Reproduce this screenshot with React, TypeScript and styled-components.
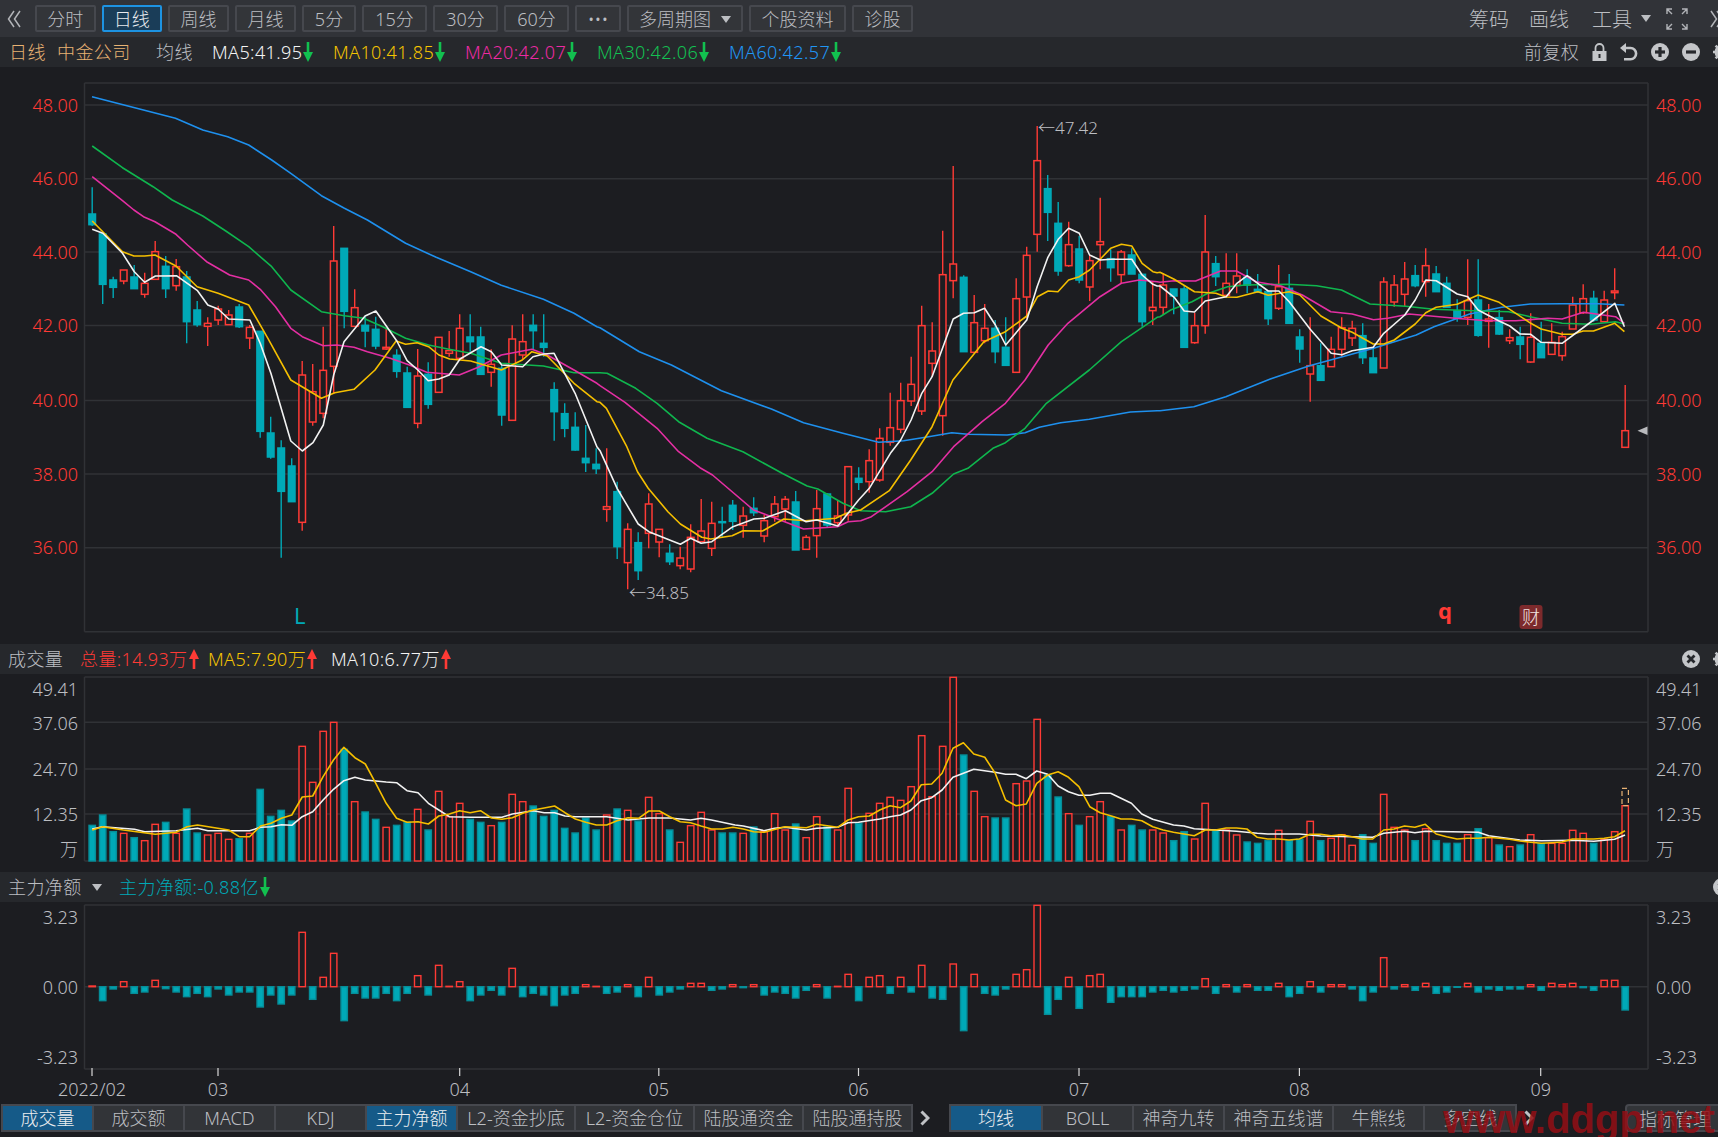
import React from "react";
import styled, { createGlobalStyle } from "styled-components";

const BG = "#1c1d21";
const RED = "#ff3a35";
const CYAN = "#00a9b7";
const GRID = "#303236";
const GREY = "#bcbec2";

const GlobalStyle = createGlobalStyle`
  html, body {
    margin: 0;
    padding: 0;
    background: ${BG};
    overflow: hidden;
    font-family: "Noto Sans", "Noto Sans CJK SC", sans-serif;
    font-weight: 300;
  }
`;

const Page = styled.div`
  position: relative;
  width: 1718px;
  height: 1137px;
  overflow: hidden;
  display: flex;
  flex-direction: column;
  background: ${BG};
`;

const Toolbar = styled.div`
  height: 37px;
  flex: none;
  display: flex;
  align-items: center;
  background: #313338;
  padding-left: 7px;
`;

const ToolGroup = styled.div`
  display: flex;
  gap: 6px;
  margin-left: 14px;
`;

const ToolButton = styled.div<{ $w: number; $active?: boolean }>`
  box-sizing: border-box;
  width: ${(p) => p.$w}px;
  height: 27px;
  padding-top: 1px;
  display: flex;
  align-items: center;
  justify-content: center;
  gap: 10px;
  font-size: 18px;
  line-height: 1;
  color: ${(p) => (p.$active ? "#e8eaee" : GREY)};
  background: ${(p) => (p.$active ? "#1a3d58" : "#333539")};
  border: 2px solid ${(p) => (p.$active ? "#1d93e2" : "#46484e")};
  border-radius: 2px;
`;

const ToolLinks = styled.div`
  margin-left: auto;
  margin-right: -6px;
  display: flex;
  align-items: center;
  font-size: 20px;
  color: ${GREY};
`;

const ToolLink = styled.span<{ $w: number }>`
  width: ${(p) => p.$w}px;
  flex: none;
`;

const Caret = styled.span<{ $ml?: number }>`
  width: 0;
  height: 0;
  flex: none;
  margin-left: ${(p) => p.$ml ?? 0}px;
  border-left: 5.5px solid transparent;
  border-right: 5.5px solid transparent;
  border-top: 7px solid ${GREY};
`;

const InfoRow = styled.div`
  height: 30px;
  flex: none;
  display: flex;
  align-items: center;
  background: #26282c;
  font-size: 18px;
  line-height: 1;
  padding-left: 9px;
`;

const SubHeader = styled(InfoRow)`
  padding-left: 8px;
`;

const Label = styled.span<{ $c: string; $w: number }>`
  flex: none;
  width: ${(p) => p.$w}px;
  color: ${(p) => p.$c};
  display: flex;
  align-items: center;
  gap: 1px;
  letter-spacing: 0.4px;
  white-space: nowrap;
`;

const RightTools = styled.div`
  margin-left: auto;
  margin-right: -13px;
  display: flex;
  align-items: center;
  gap: 13px;
  color: ${GREY};
`;

const Svg = styled.svg`
  display: block;
  flex: none;
`;

const ChartSvg = styled.svg`
  display: block;
  flex: none;
`;

const ChartText = styled.text<{ $c?: string; $s?: number; $w?: number }>`
  fill: ${(p) => p.$c ?? GREY};
  font-size: ${(p) => p.$s ?? 18}px;
  font-weight: ${(p) => p.$w ?? 300};
  dominant-baseline: central;
`;

const TabsRow = styled.div`
  height: 34px;
  flex: none;
  display: flex;
  align-items: flex-start;
  padding: 1px 0 0 1px;
`;

const TabGroup = styled.div`
  display: flex;
  gap: 2px;
  padding: 2px;
  background: #46484e;
`;

const Tab = styled.div<{ $w: number; $active?: boolean }>`
  width: ${(p) => p.$w}px;
  height: 24px;
  display: flex;
  align-items: center;
  justify-content: center;
  font-size: 18px;
  line-height: 1;
  color: ${(p) => (p.$active ? "#eceef0" : GREY)};
  background: ${(p) => (p.$active ? "#155a88" : "#323438")};
`;

const ChevronSlot = styled.div<{ $w: number }>`
  width: ${(p) => p.$w}px;
  height: 28px;
  flex: none;
  display: flex;
  align-items: center;
  padding-left: 7px;
  box-sizing: border-box;
`;

const ManageButton = styled.div`
  box-sizing: border-box;
  width: 100px;
  height: 28px;
  margin-left: 92px;
  flex: none;
  padding-left: 12px;
  display: flex;
  align-items: center;
  font-size: 18px;
  color: ${GREY};
  background: #323438;
  border: 2px solid #46484e;
  border-radius: 4px 0 0 4px;
  white-space: nowrap;
`;

const Watermark = styled.div`
  position: absolute;
  left: 1443px;
  top: 1096px;
  font-family: "Liberation Sans", sans-serif;
  font-weight: 700;
  font-size: 40px;
  line-height: 46px;
  color: rgba(148, 14, 20, 0.85);
  white-space: nowrap;
  pointer-events: none;
`;

type Row = number[];
type Pt = [number, number];

const X0 = 92.2;
const STEP = 10.5;
const barX = (i: number) => X0 + STEP * i;

// candle rows: body top, body bottom, high, low, 1 = up (hollow red). Read from the chart at 3x.
const candleSegA: Row[] = [
  [252,284,172,288,0],[312,463,312,522,0],[450,472,440,504,0],[420,453,420,463,1],[441,476,405,476,0],
  [460,493,428,503,1],[365,448,333,448,1],[409,476,378,504,0],[410,467,387,482,1],[441,575,423,640,0],
  [540,584,513,590,0],[580,589,562,648,1],[537,570,527,585,1],[555,584,540,584,1],[531,590,522,594,0],
  [592,624,585,657,1],[604,904,604,923,0],[909,981,860,986,0],[954,1084,931,1283,0],[1008,1115,985,1115,0],
  [735,1177,693,1202,1],[785,876,702,887,1],[721,850,590,865,1],[393,709,288,790,1],[355,544,355,595,0],
  [533,589,478,590,1],[586,603,560,652,0],[598,648,560,658,0],[652,657,595,660,1],[676,724,658,743,0],
  [729,832,710,833,0],[738,880,657,895,1],[733,823,697,836,0],[622,787,622,787,1],[662,670,603,680,1],
  [595,685,553,685,1],[621,635,553,665,0],[621,733,590,733,0],[703,727,658,770,1],[715,855,706,887,0],
  [627,871,586,871,1],[635,675,553,688,1],[586,602,553,660,0],[640,652,553,680,0],[779,845,757,932,0],
  [851,895,820,922,0],[892,960,847,962,0],[985,998,885,1026,0],[1003,1016,955,1032,0],
];
const candleSegB: Row[] = [
  [1220,1228,1045,1265,1],[1175,1340,1145,1377,0],[1288,1388,1270,1468,1],[1328,1412,1297,1440,0],[1212,1300,1180,1345,1],
  [1288,1326,1288,1372,1],[1360,1385,1333,1395,0],[1374,1397,1340,1408,1],[1312,1407,1273,1417,1],[1293,1325,1197,1325,1],
  [1270,1345,1205,1368,1],[1265,1268,1220,1310,0],[1216,1264,1200,1290,0],[1248,1276,1220,1313,1],[1225,1238,1192,1248,0],
  [1262,1308,1245,1327,1],[1212,1250,1188,1265,1],[1198,1227,1188,1265,1],[1206,1350,1173,1350,0],[1312,1348,1305,1348,1],
  [1226,1307,1170,1373,1],[1182,1275,1180,1282,0],[1248,1268,1200,1280,1],[1100,1245,1100,1262,1],[1135,1147,1102,1170,0],
  [1082,1145,1048,1178,1],[1015,1140,985,1145,1],[983,1027,878,1037,1],[902,988,848,1000,1],[853,903,770,918,1],
  [677,933,617,945,1],[753,790,667,830,1],[524,947,392,1007,1],[492,542,198,595,1],[532,755,526,755,0],
  [668,757,585,760,1],[685,722,612,730,1],[685,755,660,790,0],[742,796,652,796,0],[596,817,535,817,1],
  [466,591,440,655,1],[182,403,78,455,1],[266,337,225,423,0],[370,513,306,527,0],[434,497,365,500,1],
  [447,540,408,550,0],[482,561,465,603,1],[425,434,293,508,1],[476,503,448,545,0],[456,524,450,550,1],
  [465,522,445,522,0],[523,665,523,680,0],[622,632,545,675,1],
];
const candleSegC: Row[] = [
  [195,262,160,285,1],[207,228,207,283,0],[207,382,195,382,0],[317,368,278,371,1],[96,317,-15,341,1],
  [131,170,108,198,0],[190,226,100,226,1],[168,196,100,220,1],[172,195,148,220,0],[208,216,162,218,0],
  [215,296,215,315,0],[200,265,135,270,1],[205,310,162,310,0],[351,387,328,428,0],[437,462,292,545,1],
  [437,481,370,482,0],[388,440,350,440,1],[323,388,292,410,1],[325,354,302,378,1],[347,413,310,432,0],
  [414,458,380,458,0],[186,444,172,444,1],[195,246,165,260,1],[177,223,126,260,1],[167,197,135,202,0],
  [137,185,85,230,1],[162,215,138,215,0],[190,262,170,262,0],[272,295,238,305,0],[242,292,118,315,1],
  [240,346,118,350,0],[297,304,252,383,1],[293,342,270,345,0],[353,362,328,372,1],[351,373,320,418,0],
  [352,426,280,428,1],[370,413,305,413,0],[367,403,310,405,1],[350,407,335,422,1],[255,327,230,327,1],
  [236,278,193,282,1],[235,300,212,305,0],[240,305,212,305,1],[213,218,145,238,1],[632,682,495,682,1],
];

const decode = (rows: Row[], y0: number) =>
  rows.map(([t, b, h, l, up]) => ({
    top: y0 + t / 3,
    bottom: y0 + b / 3,
    high: y0 + h / 3,
    low: y0 + l / 3,
    up: up === 1,
  }));

const candles = [
  ...decode(candleSegA, 130),
  ...decode(candleSegB, 100),
  ...decode(candleSegC, 220),
];

const sA = (p: Pt[]): Pt[] => p.map(([x, y]) => [x / 2.6133, 130 + y / 3]);
const sB = (p: Pt[]): Pt[] => p.map(([x, y]) => [600 + x / 2.8, 100 + y / 3]);
const sC = (p: Pt[]): Pt[] => p.map(([x, y]) => [1160 + x / 2.81, 220 + y / 3]);
const sV1 = (p: Pt[]): Pt[] => p.map(([x, y]) => [x / 1.823, 640 + y / 3]);
const sV2 = (p: Pt[]): Pt[] => p.map(([x, y]) => [860 + x / 1.8275, 640 + y / 3]);

const ma60: Pt[] = [
  [92, 96.7], [175.5, 118.3],
  ...sA([[530,0],[595,20],[650,45],[710,90],[760,130],[840,197],[900,235],[960,270],[1060,340],[1140,382],[1230,425],[1310,466],[1420,508],[1500,550],[1560,590]]),
  ...sB([[0,683],[110,755],[200,795],[340,872],[480,927],[570,968],[680,1000],[780,1027],[850,1022],[920,1010],[985,998],[1030,1003],[1140,1005],[1190,998],[1230,982],[1290,968],[1370,958],[1485,936],[1560,932]]),
  ...sC([[0,572],[95,560],[185,530],[310,477],[420,437],[600,385],[720,345],[770,320],[870,282],[960,262],[1040,252],[1130,251],[1230,251],[1305,255]]),
];
const ma30: Pt[] = [
  ...sA([[241,48],[320,113],[400,170],[450,210],[530,258],[590,303],[650,350],[710,410],[760,480],[840,545],[900,557],[950,565],[1000,590],[1060,625],[1120,645],[1170,657],[1230,670],[1310,700],[1420,708],[1500,728],[1560,728]]),
  ...sB([[0,818],[20,820],[100,865],[160,910],[220,965],[300,1015],[400,1055],[510,1120],[580,1158],[610,1167],[680,1210],[730,1232],[800,1235],[870,1220],[930,1180],[990,1122],[1030,1105],[1100,1045],[1135,1028],[1190,985],[1250,910],[1370,810],[1460,725],[1560,652]]),
  ...sC([[0,290],[30,270],[90,245],[130,222],[190,200],[240,195],[360,193],[440,197],[510,210],[590,252],[690,259],[770,268],[880,272],[980,275],[1040,290],[1130,310],[1210,313],[1280,305],[1305,312]]),
];
const ma20: Pt[] = [
  ...sA([[241,140],[320,212],[350,240],[375,260],[405,275],[460,313],[490,345],[540,395],[600,435],[650,450],[680,478],[720,530],[760,595],[790,620],[845,647],[880,645],[925,652],[960,665],[1020,685],[1070,705],[1115,727],[1200,735],[1250,712],[1310,675],[1390,658],[1430,675],[1500,720],[1560,760]]),
  ...sB([[0,857],[70,907],[160,985],[220,1055],[280,1103],[315,1125],[430,1230],[570,1287],[665,1280],[695,1265],[730,1262],[760,1250],[860,1175],[930,1115],[990,1040],[1070,965],[1135,910],[1190,840],[1255,735],[1310,670],[1400,590],[1460,550],[1510,540],[1560,545]]),
  ...sC([[0,187],[40,182],[100,183],[170,153],[215,153],[270,185],[340,198],[400,225],[480,275],[540,282],[600,299],[640,295],[700,282],[830,295],[920,302],[1000,302],[1090,295],[1130,297],[1190,277],[1280,290],[1305,310]]),
];
const ma10: Pt[] = [
  ...sA([[241,273],[320,365],[350,378],[378,378],[405,375],[460,408],[515,470],[570,490],[650,525],[700,625],[760,750],[840,805],[875,788],[925,778],[980,720],[1035,633],[1060,643],[1090,638],[1120,650],[1147,675],[1175,687],[1230,693],[1310,720],[1365,690],[1390,665],[1430,678],[1500,760],[1560,815]]),
  ...sB([[0,907],[18,925],[75,1040],[105,1115],[135,1165],[190,1235],[225,1272],[285,1312],[310,1317],[370,1307],[400,1292],[455,1293],[515,1257],[575,1262],[660,1255],[690,1240],[730,1230],[810,1172],[870,1080],[930,980],[988,840],[1075,725],[1135,695],[1195,648],[1225,590],[1255,573],[1282,575],[1312,540],[1342,530],[1371,510],[1430,445],[1460,433],[1489,438],[1518,490],[1548,515],[1560,518]]),
  ...sC([[0,157],[40,178],[97,215],[157,220],[186,231],[216,232],[275,215],[304,226],[363,215],[393,225],[452,288],[511,325],[540,337],[599,372],[629,372],[658,360],[717,312],[747,278],[776,262],[835,253],[894,225],[953,247],[1042,310],[1071,327],[1130,343],[1160,343],[1189,333],[1218,333],[1278,310],[1305,335]]),
];
const ma5: Pt[] = [
  ...sA([[241,298],[269,310],[320,370],[351,425],[378,457],[406,438],[461,437],[516,482],[543,525],[570,537],[598,567],[653,570],[680,640],[708,730],[760,933],[790,963],[818,938],[845,885],[872,735],[899,635],[954,558],[982,543],[1037,633],[1064,692],[1092,720],[1119,752],[1147,747],[1174,735],[1202,687],[1257,650],[1284,665],[1311,705],[1366,710],[1393,680],[1421,672],[1448,670],[1503,790],[1560,950]]),
  ...sB([[0,1052],[48,1165],[78,1220],[107,1272],[137,1295],[195,1320],[225,1333],[254,1315],[283,1330],[313,1325],[372,1280],[431,1257],[460,1255],[519,1232],[577,1265],[607,1260],[666,1278],[724,1200],[754,1165],[813,1060],[842,1020],[871,960],[901,880],[930,830],[989,657],[1018,640],[1048,638],[1077,625],[1107,675],[1136,735],[1195,660],[1224,560],[1254,472],[1283,418],[1312,385],[1342,400],[1371,465],[1401,480],[1430,478],[1489,478],[1518,525],[1548,553],[1560,558]]),
  ...sC([[0,198],[40,232],[68,273],[97,276],[127,243],[186,230],[216,190],[245,167],[304,213],[334,213],[363,245],[422,328],[481,400],[511,404],[540,392],[599,382],[629,340],[688,285],[717,240],[747,180],[776,182],[835,222],[865,230],[894,270],[953,303],[983,318],[1012,342],[1042,343],[1071,367],[1130,370],[1218,300],[1278,250],[1305,320]]),
];

// volume bars: top of bar read at 3x, negative = up day (red hollow)
const volumeTops = [
  556,525,575,-580,593,-602,-553,547,-580,507,579,-585,-580,-598,596,-580,448,529,511,543,
  -319,-427,-274,-247,328,-485,516,538,-562,556,547,-508,570,-454,-530,-490,538,547,-557,547,
  -463,-485,498,529,511,565,579,534,570,-525,507,-511,543,-472,-521,570,-607,-557,-517,-570,
  579,579,-580,561,-575,-521,-570,552,-593,-530,561,-570,-445,550,
  -520,-490,-472,-481,-440,-287,-470,-319,-112,345,-454,-530,534,534,-431,-423,-238,405,471,-521,
  556,-530,-485,530,-570,556,570,-570,-579,602,575,-597,-490,570,-570,-585,606,610,602,-571,
  602,598,-544,602,-595,-584,-616,584,610,-463,-562,-570,602,-566,602,610,610,-584,566,-593,
  615,-620,615,-584,611,-610,-610,-571,-580,610,-598,-575,-497,
];

const volMa5: Pt[] = [
  ...sV1([[168,570],[187,560],[225,570],[283,583],[321,577],[341,560],[360,555],[417,570],[436,590],[455,590],[475,558],[494,550],[513,535],[532,525],[551,471],[570,468],[589,410],[608,360],[627,322],[647,353],[666,372],[685,430],[704,490],[723,535],[742,547],[762,545],[781,552],[800,528],[819,522],[838,512],[857,518],[876,512],[896,534],[915,538],[934,533],[953,520],[972,510],[992,504],[1011,498],[1030,518],[1049,537],[1068,547],[1087,555],[1106,555],[1125,542],[1145,533],[1164,535],[1183,513],[1202,513],[1221,530],[1240,545],[1259,548],[1278,558],[1297,567],[1317,567],[1336,562],[1355,567],[1374,575],[1393,577],[1431,560],[1470,563],[1489,553],[1527,562],[1546,540],[1565,530]]),
  ...sV2([[17,528],[36,510],[55,497],[74,503],[93,483],[112,434],[131,432],[150,400],[170,325],[189,308],[208,342],[228,352],[247,400],[266,480],[285,497],[304,492],[323,430],[343,405],[362,395],[381,412],[400,440],[420,500],[439,518],[458,527],[477,537],[496,537],[515,542],[535,560],[554,570],[573,577],[592,582],[611,587],[631,570],[650,570],[669,564],[688,564],[707,567],[726,592],[745,597],[765,597],[784,600],[803,597],[822,583],[842,583],[861,587],[880,584],[899,590],[918,597],[937,597],[957,570],[976,567],[995,558],[1014,562],[1033,553],[1053,582],[1072,590],[1091,597],[1110,595],[1130,595],[1149,592],[1168,595],[1187,598],[1206,603],[1226,607],[1245,610],[1264,608],[1283,606],[1302,597],[1322,597],[1341,597],[1360,595],[1379,590],[1398,572]]),
];
const volMa10: Pt[] = [
  ...sV1([[168,567],[187,560],[245,568],[264,575],[321,572],[360,565],[379,572],[455,572],[475,562],[494,560],[513,554],[532,556],[551,530],[570,515],[589,480],[608,448],[627,422],[647,412],[666,420],[704,426],[723,428],[742,452],[762,458],[781,490],[800,510],[819,530],[857,532],[915,532],[934,522],[972,512],[992,518],[1011,518],[1030,528],[1049,530],[1106,530],[1145,540],[1183,534],[1221,534],[1259,540],[1278,535],[1297,540],[1340,555],[1355,558],[1393,572],[1412,565],[1431,562],[1470,570],[1489,565],[1527,562],[1546,548],[1565,547]]),
  ...sV2([[36,537],[55,530],[74,525],[93,510],[112,482],[131,473],[150,450],[170,412],[208,388],[247,397],[266,403],[285,403],[304,416],[323,393],[343,403],[362,438],[381,455],[400,466],[420,466],[439,460],[458,460],[477,475],[496,490],[515,522],[535,538],[573,555],[592,558],[611,566],[650,570],[688,574],[726,580],[745,582],[803,582],[842,588],[899,590],[937,592],[957,580],[995,574],[1014,578],[1033,574],[1130,577],[1149,587],[1206,600],[1245,602],[1302,601],[1341,604],[1379,598],[1398,585]]),
];

// net flow bars: end of bar read at 3x, zero sits at 350
const netEnds = [
  348,392,357,335,370,366,331,356,366,380,370,380,357,375,366,366,411,375,402,375,
  187,388,322,250,452,370,384,384,370,392,370,317,375,286,349,335,392,375,361,375,
  295,380,370,375,407,375,370,344,349,370,366,344,380,322,375,366,357,340,340,361,
  357,344,353,344,375,366,370,384,361,344,384,349,313,392,
  322,317,370,322,366,286,384,388,282,482,313,370,375,357,313,299,106,433,388,322,
  415,317,313,397,380,380,380,366,361,366,361,357,326,370,344,366,344,361,361,340,
  380,370,335,366,344,344,357,392,366,263,357,344,361,340,370,366,352,340,366,357,
  361,357,357,344,361,340,344,340,353,361,331,331,420,
];

const path = (pts: Pt[]) => pts.map(([x, y]) => `${x.toFixed(1)},${y.toFixed(1)}`).join(" ");

const MaLine = styled.polyline<{ $c: string }>`
  fill: none;
  stroke: ${(p) => p.$c};
  stroke-width: 1.6;
  stroke-linejoin: round;
`;

const GridLine = styled.line`
  stroke: ${GRID};
  stroke-width: 1.5;
`;

const Candle = styled.g<{ $up: boolean }>`
  rect {
    fill: ${(p) => (p.$up ? BG : CYAN)};
    stroke: ${(p) => (p.$up ? RED : CYAN)};
    stroke-width: 1.5;
  }
  line {
    stroke: ${(p) => (p.$up ? RED : CYAN)};
    stroke-width: 1.4;
  }
`;

const Bar = styled.rect<{ $up: boolean }>`
  fill: ${(p) => (p.$up ? BG : CYAN)};
  stroke: ${(p) => (p.$up ? RED : "#058e99")};
  stroke-width: 1.4;
`;

const L = 84.5;
const R = 1648;

const Frame = ({ top, bottom }: { top: number; bottom: number }) => (
  <>
    <GridLine x1={L} x2={R} y1={top} y2={top} />
    <GridLine x1={L} x2={R} y1={bottom} y2={bottom} />
    <GridLine x1={L} x2={L} y1={top} y2={bottom} />
    <GridLine x1={R} x2={R} y1={top} y2={bottom} />
  </>
);

const priceTicks: [string, number][] = [
  ["48.00", 105],
  ["46.00", 178.7],
  ["44.00", 252],
  ["42.00", 325.6],
  ["40.00", 400.5],
  ["38.00", 474],
  ["36.00", 547.7],
];

const MainChart = () => (
  <ChartSvg width={1718} height={577} viewBox="0 67 1718 577">
    <Frame top={83} bottom={631.7} />
    {priceTicks.map(([t, y]) => (
      <g key={t}>
        <GridLine x1={L} x2={R} y1={y} y2={y} />
        <ChartText x={78} y={y - 0.5} textAnchor="end" $c="#ff3a35">{t}</ChartText>
        <ChartText x={1656} y={y - 0.5} $c="#ff3a35">{t}</ChartText>
      </g>
    ))}
    {candles.map((c, i) => {
      const x = barX(i);
      return (
        <Candle key={i} $up={c.up}>
          <line x1={x} x2={x} y1={c.high} y2={c.top} />
          <line x1={x} x2={x} y1={c.bottom} y2={c.low} />
          <rect x={x - 3.3} y={c.top} width={6.6} height={c.bottom - c.top} />
        </Candle>
      );
    })}
    <MaLine $c="#1e90ee" points={path(ma60)} />
    <MaLine $c="#0fb64e" points={path(ma30)} />
    <MaLine $c="#e42fa3" points={path(ma20)} />
    <MaLine $c="#f5bf00" points={path(ma10)} />
    <MaLine $c="#f2f2f2" points={path(ma5)} />
    <ChartText x={1038} y={127.5} $s={17}>←47.42</ChartText>
    <ChartText x={629} y={592.5} $s={17}>←34.85</ChartText>
    <ChartText x={294} y={615} $c={CYAN} $s={22} $w={400}>L</ChartText>
    <ChartText x={1438} y={610} $c={RED} $s={22} $w={700}>q</ChartText>
    <rect x={1519.5} y={605} width={23} height={24} rx={3} fill="#7d2a2c" />
    <ChartText x={1531} y={617} textAnchor="middle" $c="#f0e4e0" $s={18}>财</ChartText>
    <polygon points="1637.5,430.7 1647.5,426.5 1647.5,435" fill="#b9babd" />
  </ChartSvg>
);

const VOL_BOTTOM = 861;
const volTicks: [string, number][] = [
  ["49.41", 689],
  ["37.06", 723],
  ["24.70", 769],
  ["12.35", 814],
  ["万", 849],
];

const VolumeChart = () => (
  <ChartSvg width={1718} height={198} viewBox="0 674 1718 198">
    <Frame top={677} bottom={VOL_BOTTOM} />
    {[722.3, 769, 814].map((y) => (
      <GridLine key={y} x1={L} x2={R} y1={y} y2={y} />
    ))}
    {volTicks.map(([t, y]) => (
      <g key={t}>
        <ChartText x={78} y={y} textAnchor="end">{t}</ChartText>
        <ChartText x={1656} y={y}>{t}</ChartText>
      </g>
    ))}
    {volumeTops.map((v, i) => {
      const top = 640 + Math.abs(v) / 3;
      return (
        <Bar key={i} $up={v < 0} x={barX(i) - 3.2} y={top} width={6.4} height={VOL_BOTTOM - top} />
      );
    })}
    <rect x={barX(146) - 3.2} y={788.3} width={6.4} height={17.4} fill="none" stroke="#e8b273" strokeWidth={1.2} strokeDasharray="5 3" />
    <MaLine $c="#f2f2f2" points={path(volMa10)} />
    <MaLine $c="#f5bf00" points={path(volMa5)} />
  </ChartSvg>
);

const NET_ZERO = 986.7;
const axisMonths: [string, number][] = [
  ["2022/02", 92],
  ["03", 218],
  ["04", 459.7],
  ["05", 658.8],
  ["06", 858.5],
  ["07", 1079],
  ["08", 1299.4],
  ["09", 1540.7],
];

const NetChart = () => (
  <ChartSvg width={1718} height={201} viewBox="0 902 1718 201">
    <Frame top={905} bottom={1069} />
    <GridLine x1={L} x2={R} y1={NET_ZERO} y2={NET_ZERO} />
    {([["3.23", 917], ["0.00", 986.5], ["-3.23", 1057]] as [string, number][]).map(([t, y]) => (
      <g key={t}>
        <ChartText x={78} y={y} textAnchor="end">{t}</ChartText>
        <ChartText x={1656} y={y}>{t}</ChartText>
      </g>
    ))}
    {netEnds.map((v, i) => {
      const end = 870 + v / 3;
      const up = v < 350;
      return (
        <Bar
          key={i}
          $up={up}
          x={barX(i) - 3.2}
          y={up ? end : NET_ZERO}
          width={6.4}
          height={Math.abs(NET_ZERO - end)}
        />
      );
    })}
    {axisMonths.map(([t, x]) => (
      <g key={t}>
        <line x1={x} x2={x} y1={1068} y2={1076} stroke="#d8d8d8" strokeWidth={1.2} />
        <ChartText x={x} y={1089} textAnchor="middle">{t}</ChartText>
      </g>
    ))}
  </ChartSvg>
);

const Arrow = ({ color, up }: { color: string; up?: boolean }) => (
  <Svg width={10} height={20} viewBox="0 0 10 18" preserveAspectRatio="none">
    <g transform={up ? "rotate(180 5 9)" : undefined} fill={color}>
      <rect x={3.7} y={0} width={2.6} height={10} />
      <polygon points="0,9 10,9 5,18" />
    </g>
  </Svg>
);

const RoundIcon = ({ kind }: { kind: "plus" | "minus" | "close" }) => (
  <Svg width={18} height={18} viewBox="0 0 18 18">
    <circle cx={9} cy={9} r={9} fill="#c4c6c9" />
    {kind !== "close" && <rect x={4} y={7.4} width={10} height={3.2} fill="#26282c" />}
    {kind === "plus" && <rect x={7.4} y={4} width={3.2} height={10} fill="#26282c" />}
    {kind === "close" && (
      <path d="M5.5 5.5l7 7M12.5 5.5l-7 7" stroke="#26282c" strokeWidth={2.8} />
    )}
  </Svg>
);

const GearIcon = () => (
  <Svg width={18} height={18} viewBox="0 0 18 18">
    <circle cx={9} cy={9} r={5.5} fill="none" stroke="#c4c6c9" strokeWidth={4} />
    <path d="M9 0v18M0 9h18M2.6 2.6l12.8 12.8M15.4 2.6L2.6 15.4" stroke="#c4c6c9" strokeWidth={2.6} />
  </Svg>
);

const LockIcon = () => (
  <Svg width={15} height={18} viewBox="0 0 15 18">
    <path d="M3.5 8V5a4 4 0 0 1 8 0V8" fill="none" stroke="#c4c6c9" strokeWidth={1.8} />
    <rect x={0.5} y={8} width={14} height={10} fill="#c4c6c9" />
    <rect x={6.5} y={11} width={2} height={4} fill="#26282c" />
  </Svg>
);

const UndoIcon = () => (
  <Svg width={18} height={18} viewBox="0 0 18 18">
    <path d="M4 5h6.5a5.6 5.6 0 0 1 0 11.2H4" fill="none" stroke="#c4c6c9" strokeWidth={2.6} />
    <polygon points="6,0 6,10 0,5" fill="#c4c6c9" />
  </Svg>
);

const FullscreenIcon = () => (
  <Svg width={22} height={22} viewBox="0 0 22 22" fill="none" stroke="#b2b4b8" strokeWidth={1.4}>
    <path d="M1 6V1h5M1 1l5 5M21 6V1h-5M21 1l-5 5M1 16v5h5M1 21l5-5M21 16v5h-5M21 21l-5-5" />
  </Svg>
);

const DoubleChevron = ({ flip }: { flip?: boolean }) => (
  <Svg width={14} height={18} viewBox="0 0 14 18" fill="none" stroke="#b2b4b8" strokeWidth={1.5}>
    <g transform={flip ? "matrix(-1 0 0 1 14 0)" : undefined}>
      <path d="M7 1L1.5 9 7 17M13 1L7.5 9 13 17" />
    </g>
  </Svg>
);

const Chevron = () => (
  <Svg width={10} height={16} viewBox="0 0 10 16" fill="none" stroke="#c0c2c5" strokeWidth={3}>
    <path d="M1.5 1.5L8 8l-6.5 6.5" />
  </Svg>
);

const toolButtons: [string, number][] = [
  ["分时", 60.5],
  ["日线", 60.5],
  ["周线", 61],
  ["月线", 61],
  ["5分", 54],
  ["15分", 65],
  ["30分", 65],
  ["60分", 65],
];

const indicatorTabs: [string, number, boolean?][] = [
  ["成交量", 89, true],
  ["成交额", 89],
  ["MACD", 89],
  ["KDJ", 89],
  ["主力净额", 89, true],
  ["L2-资金抄底", 116],
  ["L2-资金仓位", 117],
  ["陆股通资金", 107],
  ["陆股通持股", 107],
];

const overlayTabs: [string, number, boolean?][] = [
  ["均线", 90, true],
  ["BOLL", 89],
  ["神奇九转", 89],
  ["神奇五线谱", 107],
  ["牛熊线", 89],
  ["多空线", 90],
];

const maValues: [string, string, number][] = [
  ["MA5:41.95", "#f4f4f4", 121],
  ["MA10:41.85", "#f5c400", 132],
  ["MA20:42.07", "#ee2aa4", 132],
  ["MA30:42.06", "#13c052", 132],
  ["MA60:42.57", "#2096f5", 120],
];

export default function App() {
  return (
    <Page>
      <GlobalStyle />
      <Toolbar>
        <DoubleChevron />
        <ToolGroup>
          {toolButtons.map(([t, w]) => (
            <ToolButton key={t} $w={w} $active={t === "日线"}>{t}</ToolButton>
          ))}
          <ToolButton $w={46}>•••</ToolButton>
          <ToolButton $w={116}>多周期图<Caret /></ToolButton>
          <ToolButton $w={97}>个股资料</ToolButton>
          <ToolButton $w={61}>诊股</ToolButton>
        </ToolGroup>
        <ToolLinks>
          <ToolLink $w={60}>筹码</ToolLink>
          <ToolLink $w={63}>画线</ToolLink>
          <ToolLink $w={49}>工具</ToolLink>
          <Caret />
          <Svg width={15} height={1} />
          <FullscreenIcon />
          <Svg width={22} height={1} />
          <DoubleChevron flip />
        </ToolLinks>
      </Toolbar>
      <InfoRow>
        <Label $c="#e8b273" $w={48}>日线</Label>
        <Label $c="#e8b273" $w={99}>中金公司</Label>
        <Label $c={GREY} $w={56}>均线</Label>
        {maValues.map(([t, c, w]) => (
          <Label key={t} $c={c} $w={w}>{t}<Arrow color="#12c04f" /></Label>
        ))}
        <RightTools>
          <Label $c={GREY} $w={55}>前复权</Label>
          <LockIcon />
          <UndoIcon />
          <RoundIcon kind="plus" />
          <RoundIcon kind="minus" />
          <GearIcon />
        </RightTools>
      </InfoRow>
      <MainChart />
      <SubHeader>
        <Label $c={GREY} $w={72}>成交量</Label>
        <Label $c={RED} $w={128}>总量:14.93万<Arrow color={RED} up /></Label>
        <Label $c="#f5c400" $w={123}>MA5:7.90万<Arrow color={RED} up /></Label>
        <Label $c="#f4f4f4" $w={125}>MA10:6.77万<Arrow color={RED} up /></Label>
        <RightTools>
          <RoundIcon kind="close" />
          <GearIcon />
        </RightTools>
      </SubHeader>
      <VolumeChart />
      <SubHeader>
        <Label $c={GREY} $w={111}>
          主力净额
          <Svg width={8} height={1} />
          <Caret />
        </Label>
        <Label $c={CYAN} $w={170}>主力净额:-0.88亿<Arrow color="#12c04f" /></Label>
        <RightTools>
          <RoundIcon kind="close" />
        </RightTools>
      </SubHeader>
      <NetChart />
      <TabsRow>
        <TabGroup>
          {indicatorTabs.map(([t, w, a]) => (
            <Tab key={t} $w={w} $active={a}>{t}</Tab>
          ))}
        </TabGroup>
        <ChevronSlot $w={36}><Chevron /></ChevronSlot>
        <TabGroup>
          {overlayTabs.map(([t, w, a]) => (
            <Tab key={t} $w={w} $active={a}>{t}</Tab>
          ))}
        </TabGroup>
        <ChevronSlot $w={16}><Chevron /></ChevronSlot>
        <ManageButton>指标管理</ManageButton>
      </TabsRow>
      <Watermark>www.ddgp.net</Watermark>
    </Page>
  );
}
